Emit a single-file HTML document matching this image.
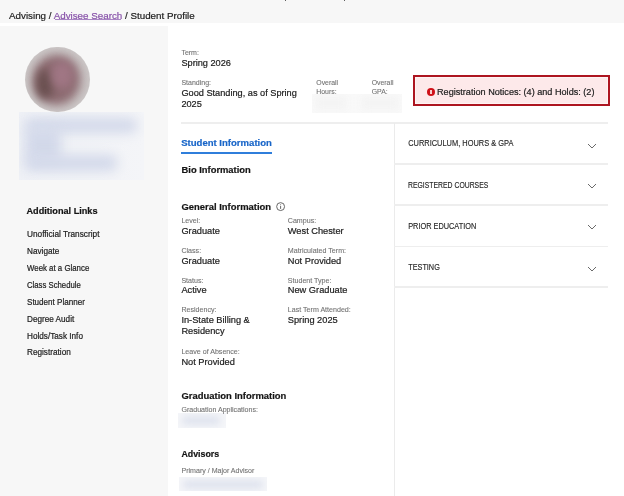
<!DOCTYPE html>
<html><head><meta charset="utf-8"><style>
html,body{margin:0;padding:0;}
body{width:624px;height:496px;position:relative;overflow:hidden;background:#fff;font-family:"Liberation Sans",sans-serif;}
.t{position:absolute;white-space:nowrap;-webkit-text-stroke:0.2px currentColor;}
.txt{position:absolute;left:0;top:0;width:624px;height:496px;will-change:transform;}
.lk{color:#8752a8;}
.bc{position:absolute;left:0;top:0;width:624px;height:22.7px;background:#f7f7f7;}
.side{position:absolute;left:0;top:25.8px;width:168px;height:480px;background:#f7f7f7;}
.gap{position:absolute;left:0;top:22.7px;width:168px;height:3.1px;background:#fff;}
.hl{position:absolute;height:1.5px;background:#eeeeee;}
.vl{position:absolute;left:394px;top:123px;width:1px;height:380px;background:#ebebeb;}
.chev{position:absolute;left:587px;line-height:0;} .chev svg{display:block;}
.reg{position:absolute;left:413.3px;top:75.4px;width:192.4px;height:26.7px;border:2px solid #ad1520;background:#fde9ea;box-shadow: inset 0 0 0 1px #fff3f3;}
.ico{position:absolute;left:426.8px;top:87.9px;width:8.1px;height:8.1px;border-radius:50%;background:#cf1018;}
.ico:before{content:"";position:absolute;left:3.4px;top:2.1px;width:1.4px;height:2.6px;background:#f6cccc;}
.ico:after{content:"";position:absolute;left:3.4px;top:5.3px;width:1.4px;height:1.1px;background:#f6cccc;}
.info{position:absolute;left:276px;top:202px;line-height:0;} .info svg{display:block;}
.tab{position:absolute;left:181.2px;top:152.1px;width:90.7px;height:2px;background:#2f7edb;}
.avatar{position:absolute;left:25.4px;top:46.6px;width:64.3px;height:65.8px;border-radius:50%;overflow:hidden;
 background:radial-gradient(circle at 50% 50%, #b6a7aa 0%, #bdb3b4 45%, #cbc6c6 70%, #d5d2d2 100%);}
.av1{position:absolute;left:9px;top:9px;width:45px;height:48px;border-radius:50%;background:#8c6a70;filter:blur(5px);}
.av2{position:absolute;left:26px;top:14px;width:22px;height:28px;border-radius:50%;background:#a07684;filter:blur(5px);}
.av3{position:absolute;left:11px;top:22px;width:18px;height:30px;border-radius:50%;background:#6a5050;filter:blur(5px);}
.namebox{position:absolute;left:19.4px;top:112px;width:124.3px;height:68px;background:linear-gradient(90deg,#eff1f6,#f4f5f8);overflow:hidden;}
.nb{position:absolute;background:#d3d9ea;filter:blur(6px);border-radius:6px;}
.blur1{position:absolute;left:177.9px;top:412.9px;width:47.9px;height:15.2px;background:#f5f6f9;overflow:hidden;}
.blur2{position:absolute;left:178.7px;top:476.7px;width:88.8px;height:14.5px;background:#f5f6f9;overflow:hidden;}
.bl{position:absolute;background:#dfe3ee;filter:blur(3.5px);border-radius:4px;}
.bh{position:absolute;background:#f3f3f3;filter:blur(4px);}
</style></head><body>
<div class="bc"></div>
<div style="position:absolute;left:284.6px;top:0;width:1.6px;height:1.4px;border-radius:0 0 1px 1px;background:#555;"></div>
<div style="position:absolute;left:343.5px;top:0;width:1.6px;height:1.4px;border-radius:0 0 1px 1px;background:#555;"></div>
<div style="position:absolute;left:54.6px;top:19px;width:66.2px;height:1px;background:#a985c4;"></div>
<div class="gap"></div>
<div class="side"></div>
<div class="avatar"><div class="av1"></div><div class="av3"></div><div class="av2"></div></div>
<div class="namebox"><div class="nb" style="left:6px;top:6px;width:112px;height:15px;"></div><div class="nb" style="left:6px;top:16px;width:36px;height:34px;"></div><div class="nb" style="left:6px;top:43px;width:92px;height:16px;"></div></div>
<div style="position:absolute;left:311.7px;top:94.2px;width:90.1px;height:18.5px;background:#f9f9f9;overflow:hidden;"><div class="bh" style="left:4px;top:3px;width:30px;height:12px;"></div><div class="bh" style="left:50px;top:3px;width:36px;height:12px;"></div></div>
<div class="hl" style="left:181px;top:122px;width:427px;"></div>
<div class="vl"></div>
<div class="hl" style="left:394px;top:163px;width:214px;"></div>
<div class="hl" style="left:394px;top:204px;width:214px;"></div>
<div class="hl" style="left:394px;top:245.8px;width:214px;"></div>
<div class="hl" style="left:394px;top:286.2px;width:214px;"></div>
<div class="reg"></div>
<div class="ico"></div>
<div class="info"><svg width="10" height="10" viewBox="0 0 10 10"><circle cx="4.6" cy="4.6" r="3.95" fill="none" stroke="#606060" stroke-width="0.95"/><line x1="4.6" y1="4" x2="4.6" y2="6.9" stroke="#606060" stroke-width="0.95"/><circle cx="4.6" cy="2.75" r="0.55" fill="#606060"/></svg></div>
<div class="tab"></div>
<div class="blur1"><div class="bl" style="left:4px;top:3px;width:38px;height:9px;"></div></div>
<div class="blur2"><div class="bl" style="left:4px;top:3px;width:80px;height:9px;"></div></div>
<div class="chev" style="top:142.6px"><svg width="10" height="6" viewBox="0 0 10 6"><path d="M1 1 L5 5 L9 1" fill="none" stroke="#6a6a6a" stroke-width="1"/></svg></div><div class="chev" style="top:183.4px"><svg width="10" height="6" viewBox="0 0 10 6"><path d="M1 1 L5 5 L9 1" fill="none" stroke="#6a6a6a" stroke-width="1"/></svg></div><div class="chev" style="top:224.4px"><svg width="10" height="6" viewBox="0 0 10 6"><path d="M1 1 L5 5 L9 1" fill="none" stroke="#6a6a6a" stroke-width="1"/></svg></div><div class="chev" style="top:265.6px"><svg width="10" height="6" viewBox="0 0 10 6"><path d="M1 1 L5 5 L9 1" fill="none" stroke="#6a6a6a" stroke-width="1"/></svg></div>
<div class="txt">
<div class="t" style="left:9.00px;top:10px;font-size:9.8px;line-height:11px;color:#212121;">Advising / <span class="lk">Advisee Search</span> / Student Profile</div>
<div class="t" style="left:26.50px;top:206px;font-size:9.13px;line-height:10px;font-weight:700;color:#141414;">Additional Links</div>
<div class="t" style="left:26.60px;top:230px;font-size:8.25px;line-height:9px;color:#212121;transform:scaleX(1.002);transform-origin:0 0;-webkit-text-stroke:0.2px currentColor;">Unofficial Transcript</div>
<div class="t" style="left:26.60px;top:247px;font-size:8.25px;line-height:9px;color:#212121;transform:scaleX(0.994);transform-origin:0 0;-webkit-text-stroke:0.2px currentColor;">Navigate</div>
<div class="t" style="left:26.60px;top:264px;font-size:8.25px;line-height:9px;color:#212121;transform:scaleX(0.952);transform-origin:0 0;-webkit-text-stroke:0.2px currentColor;">Week at a Glance</div>
<div class="t" style="left:26.60px;top:281px;font-size:8.25px;line-height:9px;color:#212121;transform:scaleX(0.939);transform-origin:0 0;-webkit-text-stroke:0.2px currentColor;">Class Schedule</div>
<div class="t" style="left:26.60px;top:298px;font-size:8.25px;line-height:9px;color:#212121;transform:scaleX(0.978);transform-origin:0 0;-webkit-text-stroke:0.2px currentColor;">Student Planner</div>
<div class="t" style="left:26.60px;top:315px;font-size:8.25px;line-height:9px;color:#212121;transform:scaleX(0.990);transform-origin:0 0;-webkit-text-stroke:0.2px currentColor;">Degree Audit</div>
<div class="t" style="left:26.60px;top:332px;font-size:8.25px;line-height:9px;color:#212121;transform:scaleX(0.992);transform-origin:0 0;-webkit-text-stroke:0.2px currentColor;">Holds/Task Info</div>
<div class="t" style="left:26.60px;top:348px;font-size:8.25px;line-height:9px;color:#212121;transform:scaleX(0.994);transform-origin:0 0;-webkit-text-stroke:0.2px currentColor;">Registration</div>
<div class="t" style="left:181.40px;top:49px;font-size:7.0px;line-height:7px;color:#727272;-webkit-text-stroke:0.1px currentColor;">Term:</div>
<div class="t" style="left:181.40px;top:58px;font-size:9.2px;line-height:10px;color:#212121;">Spring 2026</div>
<div class="t" style="left:181.40px;top:79px;font-size:7.0px;line-height:7px;color:#727272;-webkit-text-stroke:0.1px currentColor;">Standing:</div>
<div class="t" style="left:181.40px;top:88px;font-size:9.2px;line-height:10px;color:#212121;">Good Standing, as of Spring</div>
<div class="t" style="left:181.40px;top:99px;font-size:9.2px;line-height:10px;color:#212121;">2025</div>
<div class="t" style="left:316.30px;top:79px;font-size:6.9px;line-height:7px;color:#727272;-webkit-text-stroke:0.1px currentColor;">Overall</div>
<div class="t" style="left:316.30px;top:88px;font-size:6.9px;line-height:7px;color:#727272;-webkit-text-stroke:0.1px currentColor;">Hours:</div>
<div class="t" style="left:371.70px;top:79px;font-size:6.9px;line-height:7px;color:#727272;-webkit-text-stroke:0.1px currentColor;">Overall</div>
<div class="t" style="left:371.70px;top:88px;font-size:6.9px;line-height:7px;color:#727272;-webkit-text-stroke:0.1px currentColor;">GPA:</div>
<div class="t" style="left:437.00px;top:87px;font-size:9.12px;line-height:10px;color:#212121;">Registration Notices: (4) and Holds: (2)</div>
<div class="t" style="left:181.20px;top:137px;font-size:9.55px;line-height:11px;font-weight:700;color:#1865c8;">Student Information</div>
<div class="t" style="left:181.50px;top:165px;font-size:9.38px;line-height:10px;font-weight:700;color:#141414;">Bio Information</div>
<div class="t" style="left:181.40px;top:201px;font-size:9.45px;line-height:11px;font-weight:700;color:#141414;">General Information</div>
<div class="t" style="left:181.40px;top:217px;font-size:7.1px;line-height:8px;color:#727272;-webkit-text-stroke:0.1px currentColor;">Level:</div>
<div class="t" style="left:181.40px;top:226px;font-size:9.25px;line-height:10px;color:#212121;">Graduate</div>
<div class="t" style="left:287.80px;top:217px;font-size:7.1px;line-height:8px;color:#727272;-webkit-text-stroke:0.1px currentColor;">Campus:</div>
<div class="t" style="left:287.80px;top:226px;font-size:9.25px;line-height:10px;color:#212121;">West Chester</div>
<div class="t" style="left:181.40px;top:247px;font-size:7.1px;line-height:8px;color:#727272;-webkit-text-stroke:0.1px currentColor;">Class:</div>
<div class="t" style="left:181.40px;top:256px;font-size:9.25px;line-height:10px;color:#212121;">Graduate</div>
<div class="t" style="left:287.80px;top:247px;font-size:7.1px;line-height:8px;color:#727272;-webkit-text-stroke:0.1px currentColor;">Matriculated Term:</div>
<div class="t" style="left:287.80px;top:256px;font-size:9.25px;line-height:10px;color:#212121;">Not Provided</div>
<div class="t" style="left:181.40px;top:277px;font-size:7.1px;line-height:8px;color:#727272;-webkit-text-stroke:0.1px currentColor;">Status:</div>
<div class="t" style="left:181.40px;top:285px;font-size:9.25px;line-height:10px;color:#212121;">Active</div>
<div class="t" style="left:287.80px;top:277px;font-size:7.1px;line-height:8px;color:#727272;-webkit-text-stroke:0.1px currentColor;">Student Type:</div>
<div class="t" style="left:287.80px;top:285px;font-size:9.25px;line-height:10px;color:#212121;">New Graduate</div>
<div class="t" style="left:181.40px;top:306px;font-size:7.1px;line-height:8px;color:#727272;-webkit-text-stroke:0.1px currentColor;">Residency:</div>
<div class="t" style="left:181.40px;top:315px;font-size:9.25px;line-height:10px;color:#212121;">In-State Billing &</div>
<div class="t" style="left:287.80px;top:306px;font-size:7.1px;line-height:8px;color:#727272;-webkit-text-stroke:0.1px currentColor;">Last Term Attended:</div>
<div class="t" style="left:287.80px;top:315px;font-size:9.25px;line-height:10px;color:#212121;">Spring 2025</div>
<div class="t" style="left:181.40px;top:326px;font-size:9.25px;line-height:10px;color:#212121;">Residency</div>
<div class="t" style="left:181.40px;top:348px;font-size:7.1px;line-height:8px;color:#727272;-webkit-text-stroke:0.1px currentColor;">Leave of Absence:</div>
<div class="t" style="left:181.40px;top:357px;font-size:9.25px;line-height:10px;color:#212121;">Not Provided</div>
<div class="t" style="left:181.50px;top:390px;font-size:9.45px;line-height:11px;font-weight:700;color:#141414;">Graduation Information</div>
<div class="t" style="left:181.50px;top:406px;font-size:7.06px;line-height:7px;color:#727272;-webkit-text-stroke:0.1px currentColor;">Graduation Applications:</div>
<div class="t" style="left:181.50px;top:449px;font-size:8.8px;line-height:10px;font-weight:700;color:#141414;">Advisors</div>
<div class="t" style="left:181.50px;top:467px;font-size:7.06px;line-height:7px;color:#727272;-webkit-text-stroke:0.1px currentColor;">Primary / Major Advisor</div>
<div class="t" style="left:408.20px;top:139px;font-size:7.45px;line-height:9px;color:#262626;transform:scale(1.0,1.15);transform-origin:0 7px;-webkit-text-stroke:0.12px currentColor;">CURRICULUM, HOURS &amp; GPA</div>
<div class="t" style="left:408.20px;top:181px;font-size:7.35px;line-height:9px;color:#262626;transform:scale(0.933,1.15);transform-origin:0 7px;-webkit-text-stroke:0.12px currentColor;">REGISTERED COURSES</div>
<div class="t" style="left:408.20px;top:222px;font-size:7.35px;line-height:9px;color:#262626;transform:scale(1.0,1.15);transform-origin:0 7px;-webkit-text-stroke:0.12px currentColor;">PRIOR EDUCATION</div>
<div class="t" style="left:408.20px;top:263px;font-size:7.3px;line-height:9px;color:#262626;transform:scale(1.0,1.15);transform-origin:0 7px;-webkit-text-stroke:0.12px currentColor;">TESTING</div>
</div>
</body></html>
